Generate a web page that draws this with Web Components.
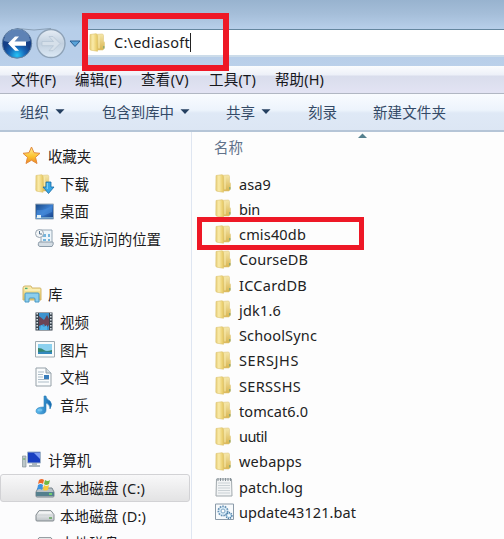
<!DOCTYPE html>
<html lang="zh-CN">
<head>
<meta charset="utf-8">
<title>ediasoft</title>
<style>
html,body{margin:0;height:100%;overflow:hidden}
body{font-family:"Noto Sans","Noto Sans CJK SC",sans-serif;color:#1c1c1e}
</style>
</head>
<body>
<explorer-window></explorer-window>
<script>
const folder = `<defs><linearGradient id="a"><stop offset="0" stop-color="#e6cd78"/><stop offset=".4" stop-color="#faeba9"/><stop offset="1" stop-color="#e6c75f"/></linearGradient><linearGradient id="b" x2="0" y2="1"><stop offset="0" stop-color="#f5e7ab"/><stop offset="1" stop-color="#d9b550"/></linearGradient></defs>
<path d="M5 1.500 13 1q1.500 0 1.500 1.500V8l1 1.500V15l-1.500 2H5z" fill="url(#b)" stroke="#e0c97f" stroke-width=".6"/><path d="M1 1.500 7 .7Q8.500 1 8.500 3v15.300L2 17.200Q.8 17 .8 16z" fill="url(#a)" stroke="#dcc26e" stroke-width=".6"/><path d="M10 2.500v13" stroke="#f7e8a8" stroke-width="1.200"/><path d="M14.800 13v2.500" stroke="#79a578" stroke-width="1.100"/>`;
const icons = {
folder:[17,19,folder],
star:[19,19,`<defs><linearGradient id="s" x2="0" y2="1"><stop stop-color="#fff09a"/><stop offset=".6" stop-color="#fbc02c"/><stop offset="1" stop-color="#ef8526"/></linearGradient></defs><path d="M9.500 1 12 6.700l6 .6-4.500 4 1.500 6.200-5.500-3.300L4 17.500l1.500-6.200L1 7.300l6-.6z" fill="url(#s)" stroke="#e28a3c" stroke-linejoin="round"/>`],
down:[19,20,`<g transform="scale(.95 1)">${folder}</g><path d="M11 8h5v5h3l-5.500 6.500L8 13h3z" fill="#38a6e5" stroke="#1769a5" stroke-width=".8"/><path d="M12.300 9v6" stroke="#8ad9fb"/>`],
desk:[19,17,`<defs><linearGradient id="d" x2="1" y2="1"><stop stop-color="#194783"/><stop offset=".5" stop-color="#3b7ed0"/><stop offset="1" stop-color="#123a80"/></linearGradient></defs><path d="M.5 1h18v15H.5z" fill="url(#d)" stroke="#9cabb9"/><path d="M1 14h17v1.500H1z" fill="#6fa3cb"/><path d="M2 7Q9 8 17 3v6L8 13H2z" fill="#478edc" opacity=".6"/><path d="M2 12h4v3H2z" fill="#e4f3f8"/>`],
recent:[19,19,`<path d="M6 1h11v13H6z" fill="#eef5fa" stroke="#96a6b4"/><path d="M8 5h3v3H8zm5 0h2v3h-2zM8 10h3v2H8zm5 0h2v2h-2z" fill="#75b5dd"/><path d="M4 13h14q1 2-1 4.500H5Q2 17 4 13z" fill="#d4dde4" stroke="#8d9ca9"/><circle cx="4.500" cy="4.500" r="4" fill="#f3f6f8" stroke="#9aa6b1"/><path d="M4.500 2v3H7" fill="none" stroke="#59738c"/>`],
lib:[20,18,`<defs><linearGradient id="l" x2="0" y2="1"><stop stop-color="#fcf0b3"/><stop offset="1" stop-color="#e5c45b"/></linearGradient></defs><path d="M1 3q0-2 2-2h6l1 2h8q1 0 1 1v11H1z" fill="url(#l)" stroke="#d2b66b"/><path d="M3 3.500h2.500" stroke="#4aae76" stroke-width="1.500"/><path d="M3 5h15" stroke="#fff7cd"/><path d="M3 9q0-1 1-1h12q1 0 1 1v8h-4v-3q0-1-1-1H8q-1 0-1 1v3H3z" fill="#8cceed" stroke="#4a98c4"/>`],
video:[18,19,`<path d="M.5.5h17v18H.5z" fill="#38434d"/><path d="M4 1h10v17H4z" fill="#3c93cf"/><path d="M4 4l5 4 3-5 2 4v6l-3 3-2-4-5 2z" fill="#6b4556"/><path d="M6 13l3 2 3-2v5H5z" fill="#51b5e9"/><path d="M2.200 1v17M15.800 1v17" stroke="#d5dde3" stroke-width="1.600" stroke-dasharray="1.500 1.500"/>`],
pic:[20,17,`<path d="M.5.5h19v15.500H.5z" fill="#f9fbfb" stroke="#9daab2"/><path d="M3 3h14v10H3z" fill="#8cd1ef"/><path d="M3 7q4 0 6 2t8 0v4H3z" fill="#35856f"/><path d="M3 11q7-1 14 0v2H3z" fill="#3388bd"/>`],
doc:[17,20,`<path d="M1 1h10l5 5v13H1z" fill="#fafcfd" stroke="#95a0a8"/><path d="M11 1v5h5" fill="#d4dde2" stroke="#95a0a8"/><path d="M3 5h6M3 7.500h5M3 10h5M3 12.500h11M3 15h11" stroke="#adbcc7"/><path d="M9 8h5v4H9z" fill="#397dbb"/>`],
music:[18,20,`<defs><linearGradient id="m"><stop stop-color="#5cbcf0"/><stop offset="1" stop-color="#1266ad"/></linearGradient></defs><path d="M9 1h2q0 3 4 5 3 3 0 8 0-5-4-6v7q0 4-5 4-5 0-5-3 0-4 8-4z" fill="url(#m)" stroke="#2b80b8" stroke-width=".6"/><ellipse cx="5" cy="15" rx="2.500" ry="1.500" fill="#9be0ff" opacity=".5"/>`],
computer:[20,18,`<path d="M.5 5h3.500v11H.5z" fill="#bcc7c9" stroke="#869398" stroke-width=".7"/><path d="M1.200 8h2" stroke="#55a74a"/><path d="M5.500 1h13v11h-13z" fill="#193fc1" stroke="#a2b5cb"/><path d="M12 2h6v6z" fill="#7d9cf2"/><path d="M10 12h5v2h3v2H7v-2h3z" fill="#a9b5bd"/>`],
osdisk:[20,20,`<path d="M3 10h14l2 4v4q0 1-1 1H2q-1 0-1-1v-4z" fill="#b7c1c7" stroke="#78858d"/><path d="M1 14h18v4H1z" fill="#55808e"/><path d="M14 16h3" stroke="#77e763" stroke-width="1.500"/><path d="M4 2q3-2 5 0L8 6Q6 4 3 6z" fill="#ee6a2b"/><path d="M10 2q3 2 5 0l-1 4q-3 2-5 0z" fill="#72b844"/><path d="M3 7q3-2 5 0l-1 5q-2-2-5 0z" fill="#3d93df"/><path d="M9 7q2 2 5 0l-1 5q-3 1-5 0z" fill="#f9ca3b"/>`],
disk:[20,12,`<defs><linearGradient id="k" x2="0" y2="1"><stop stop-color="#fff"/><stop offset="1" stop-color="#bcc2c6"/></linearGradient></defs><path d="M4 .7h12l3 4v5q0 1.300-1 1.300H2q-1 0-1-1V5z" fill="url(#k)" stroke="#81898e"/><path d="M2 5h16" stroke="#c9ced1"/><path d="M14 8h3" stroke="#62a45a" stroke-width="1.500"/>`],
log:[18,20,`<path d="M1.500 2h15l.5 17H1z" fill="#f2f4f5" stroke="#a1a9ad"/><path d="M3 1v3M5.500 1v3M8 1v3M10.500 1v3M13 1v3M15.500 1v3" stroke="#859097"/><path d="M3 6h12M3 8.500h12M3 11h12M3 13.500h12M3 16h12" stroke="#cad1d5"/>`],
bat:[20,18,`<path d="M.5 1h18v15.500H.5z" fill="#f7fafc" stroke="#8b9aa8"/><circle cx="8" cy="8" r="4.700" fill="#d9ecf8" stroke="#6590b4" stroke-width="1.700" stroke-dasharray="1.600 1"/><circle cx="8" cy="8" r="2" fill="#fff" stroke="#7fa6c4"/><circle cx="14" cy="12.500" r="2.800" fill="#d3e9f6" stroke="#4e80a9" stroke-width="1.700" stroke-dasharray="1.300 .8"/><circle cx="14" cy="12.500" r="1" fill="#fff"/>`],
arrow:[10,6,`<path d="M.5.2h9L5 5z" fill="#243f60"/>`],
nav:[82,36,`<defs><radialGradient id="n" cy=".9"><stop stop-color="#25c4f6"/><stop offset=".55" stop-color="#1768b9"/><stop offset="1" stop-color="#153f87"/></radialGradient><linearGradient id="o" x2="0" y2="1"><stop stop-color="#e6edf5"/><stop offset=".5" stop-color="#c2d0df"/><stop offset="1" stop-color="#dce9f5"/></linearGradient></defs><path d="M17 3.500Q34 6.500 51 3.500" fill="none" stroke="#899fb6"/><circle cx="17" cy="18.500" r="14.700" fill="url(#n)" stroke="#6480a0"/><path d="M4 16a13 12 0 0 1 26 0q-13 4-26 0" fill="#a5c5e4" opacity=".5"/><path d="M8 18.500l7-7h4l-4.500 5H26v4.200H14.500l4.500 5h-4z" fill="#fff"/><circle cx="51" cy="18.500" r="14" fill="url(#o)" stroke="#8ea2b7" stroke-width="1.400"/><path d="M60 18.500l-7-7h-4l4.500 5H42v4.200h11.500l-4.500 5h4z" fill="#d6e0ea" stroke="#b3c3d3" stroke-width=".7"/><path d="M70 16h10L75 21.500z" fill="#58a2d8" stroke="#285c91"/>`]
};
function define(name, css, html, setup){
  const t=document.createElement('template');
  t.innerHTML=`<style>:host{display:block;box-sizing:border-box}${css}</style>${html}`;
  customElements.define(name,class extends HTMLElement{
    constructor(){super();this.attachShadow({mode:'open'}).append(t.content.cloneNode(true));}
    connectedCallback(){if(setup)setup(this,this.shadowRoot);}
  });
}
define('ui-icon',':host{flex:none}svg{display:block;overflow:visible}','',(e,r)=>{
  const [w,h,s]=icons[e.getAttribute('name')];
  if(!r.querySelector('svg'))r.innerHTML+=`<svg width="${w}" height="${h}" viewBox="0 0 ${w} ${h}">${s}</svg>`;
});
/* Text whose tracking is adjusted to fill a given width. */
define('fit-text',':host{white-space:pre;flex:none}span{display:inline-block}','<span></span>',(e,r)=>{
  const s=r.querySelector('span'),w=+e.getAttribute('w');
  s.textContent=e.getAttribute('text');
  s.style.letterSpacing=(w-s.getBoundingClientRect().width)/s.textContent.length+'px';
  e.style.width=w+'px';
});
define('address-bar',`:host{height:66px;padding-top:29px;background:linear-gradient(#98b3cf,#a5bed9 14px,#b6cee9 28px,#b8cee9 57px,#bbd0ea)}
.row{display:flex;height:28px}.nav{width:84px;margin-top:-4px}.field{flex:1;display:flex;align-items:center;gap:8px;padding:0 0 1px 5px;background:#fff;border-top:1px solid #64869f;border-bottom:2px solid #ccdcea;box-sizing:border-box}
.in{display:flex;align-items:center;font-size:14.500px;line-height:20px}.caret{width:1px;height:19px;background:#222}`,
`<div class="row"><div class="nav"><ui-icon name="nav"></ui-icon></div><div class="field"><ui-icon name="folder"></ui-icon><div class="in"><fit-text text="C:\\ediasoft" w="76"></fit-text><div class="caret"></div></div></div></div>`);
define('menu-bar',`:host{height:28px;display:grid;grid-template-columns:64px 66px 68px 66px 1fr;padding-left:11px;font-size:14.500px;line-height:27px;background:linear-gradient(#fbfcfe,#edf0f8 9px,#d9ddec 10px,#e2e3f3 26px);border-bottom:1px solid #b1b7c3;color:#16171c}`,
[['文件(F)',45],['编辑(E)',47],['查看(V)',48],['工具(T)',47],['帮助(H)',49]].map(a=>`<fit-text text="${a[0]}" w="${a[1]}"></fit-text>`).join(''));
define('tool-bar',`:host{height:38px;display:grid;grid-template-columns:82px 124px 82px 65px 1fr;padding-left:20px;font-size:14.500px;line-height:36px;background:linear-gradient(#f9fcff,#edf4fc 16px,#dfe9f6 19px,#dce6f4);border-bottom:2px solid #b5c5d7;color:#344a66}
div{display:flex;align-items:center;gap:6px}`,
[['组织',29,1],['包含到库中',72,1],['共享',29,1],['刻录',29],['新建文件夹',73]].map(a=>`<div><fit-text text="${a[0]}" w="${a[1]}"></fit-text>${a[2]?'<ui-icon name="arrow"></ui-icon>':''}</div>`).join(''));
const iconAndText=(e,r)=>{
 r.innerHTML+=`<ui-icon name="${e.getAttribute('icon')}"></ui-icon><fit-text text="${e.getAttribute('text')}" w="${e.getAttribute('w')}"></fit-text>`;
};
define('file-row',`:host{display:grid;grid-template-columns:24px 1fr;align-items:center;height:25.250px;font-size:14.500px;line-height:22px;color:#222}`,``,iconAndText);
define('tree-node',`:host{display:grid;grid-template-columns:26px 1fr;align-items:center;height:27.700px;padding-left:22px;font-size:14.500px;line-height:22px}
:host([child]){grid-template-columns:25px 1fr;padding-left:35px}:host([selected]){border:1px solid #d2d2d5;border-radius:3px;background:linear-gradient(#f8f8f9,#e3e3e4);padding-left:34px;margin-right:1px}`,``,iconAndText);
const node=(i,t,w,a='')=>`<tree-node icon="${i}" text="${t}" w="${w}" ${a}></tree-node>`;
define('side-tree',`:host{width:192px;padding-top:10px;background:#fcfcfd;border-right:1px solid #dfe6f1;overflow:hidden}section{margin-bottom:27.600px}`,
`<section>${node('star','收藏夹',43)}${node('down','下载',29,'child')}${node('desk','桌面',29,'child')}${node('recent','最近访问的位置',101,'child')}</section>
<section>${node('lib','库',14.5)}${node('video','视频',29,'child')}${node('pic','图片',29,'child')}${node('doc','文档',29,'child')}${node('music','音乐',29,'child')}</section>
<section>${node('computer','计算机',43)}${node('osdisk','本地磁盘 (C:)',85,'child selected')}${node('disk','本地磁盘 (D:)',86,'child')}${node('disk','本地磁盘 (E:)',85,'child')}</section>`);
define('file-list',`:host{flex:1;background:#fdfdfd;padding-left:23px}
header{display:flex;height:39px;font-size:14.500px;line-height:31px;color:#61728a}header fit-text{margin-left:-1px}svg{margin:1px 0 0 115px}`,
`<header><fit-text text="名称" w="29"></fit-text><svg width="9" height="5"><path d="M0 5 4.500.5 9 5z" fill="#55808e"/></svg></header><div>`+
[['asa9',32],['bin',21],['cmis40db',67],['CourseDB',69],['ICCardDB',68],['jdk1.6',42],['SchoolSync',78],['SERSJHS',60],['SERSSHS',62],['tomcat6.0',69],['uutil',28],['webapps',63],['patch.log',64,'log'],['update43121.bat',117,'bat']].map(a=>`<file-row icon="${a[2]||'folder'}" text="${a[0]}" w="${a[1]}"></file-row>`).join('')+`</div>`);
define('red-frame',`:host{position:absolute;border:6px solid #ee1826}`,'');
define('explorer-window',`:host{position:relative;width:504px;height:539px;overflow:hidden;display:flex;flex-direction:column}main{display:flex;flex:1;min-height:0}
.one{left:82px;top:13px;width:147px;height:58px}.two{left:197px;top:217px;width:167px;height:33px;border-width:5px}`,
`<address-bar></address-bar><menu-bar></menu-bar><tool-bar></tool-bar><main><side-tree></side-tree><file-list></file-list></main><red-frame class="one"></red-frame><red-frame class="two"></red-frame>`);
</script>
</body>
</html>
